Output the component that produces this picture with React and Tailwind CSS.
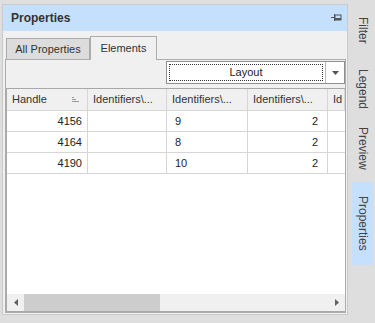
import React from "react";

const font = { fontFamily: "'Liberation Sans', Arial, sans-serif" };

const columns = [
  { title: "Handle", w: "w-[81px]", sort: true },
  { title: "Identifiers\\...", w: "w-[79px]" },
  { title: "Identifiers\\...", w: "w-[81px]" },
  { title: "Identifiers\\...", w: "w-[80px]" },
  { title: "Id", w: "flex-1" },
];

const rows = [
  ["4156", "", "9", "2"],
  ["4164", "", "8", "2"],
  ["4190", "", "10", "2"],
];

const SortIcon = () => (
  <svg width="7" height="6" viewBox="0 0 7 6" className="shrink-0">
    <rect x="0" y="0" width="2" height="1" fill="#9a9a9a" />
    <rect x="0" y="2" width="4" height="1" fill="#9a9a9a" />
    <rect x="0" y="4" width="7" height="1" fill="#9a9a9a" />
  </svg>
);

const PinIcon = () => (
  <svg width="11" height="8" viewBox="0 0 11 8">
    <rect x="0" y="3" width="3" height="1" fill="#555" />
    <rect x="3" y="0" width="1" height="7" fill="#555" />
    <rect x="4" y="1" width="6" height="5" fill="none" stroke="#555" strokeWidth="1" />
    <rect x="4" y="4" width="6" height="2" fill="#555" />
  </svg>
);

const SideTab = ({ label, active, className }) => (
  <div
    className={`flex items-center justify-center w-[21px] ${className} ${
      active ? "bg-[#c4e0fc]" : ""
    }`}
  >
    <span className="[writing-mode:vertical-rl] text-[12px] text-[#444]">{label}</span>
  </div>
);

export default function App() {
  return (
    <div className="w-[375px] h-[323px] bg-[#dedede] flex overflow-hidden" style={font}>
      {/* docked panel */}
      <div className="pt-[4px] pl-[2px]">
        <div className="w-[346px] h-[311px] border border-[#cacaca] bg-[#f0f0f0] flex flex-col">
          <div className="h-[26px] bg-[#c4e0fc] flex items-center justify-between pl-[8px] pr-[5px] shrink-0">
            <span className="text-[12px] font-bold text-[#333]">Properties</span>
            <PinIcon />
          </div>

          <div className="flex-1 flex flex-col pl-[2px] pr-[1px] pt-[5px] pb-[1px] min-h-0">
            {/* tabs */}
            <div className="flex items-end h-[23px] pl-[1px] shrink-0">
              <div className="h-[21px] w-[84px] bg-[#dcdcdc] border border-[#acacac] border-b-0 flex items-center justify-center text-[11px] text-[#333]">
                All Properties
              </div>
              <div className="h-[24px] w-[67px] bg-[#f0f0f0] border border-[#acacac] border-b-0 -mb-[1px] relative z-10 flex items-center justify-center text-[11px] text-[#333]">
                Elements
              </div>
            </div>

            {/* tab page */}
            <div className="flex-1 border border-[#acacac] flex flex-col min-h-0">
              <div className="h-[28px] flex items-start justify-end pt-[1px] shrink-0">
                <div className="w-[179px] h-[23px] border border-[#8f8f8f] bg-white flex">
                  <div className="flex-1 m-[2px] border border-dotted border-[#333] flex items-center justify-center text-[11px] text-[#222]">
                    Layout
                  </div>
                  <div className="w-[19px] border-l border-[#b8b8b8] flex items-center justify-center">
                    <svg width="7" height="4" viewBox="0 0 7 4">
                      <path d="M0 0 H7 L3.5 4 Z" fill="#555" />
                    </svg>
                  </div>
                </div>
              </div>

              {/* grid */}
              <div className="flex-1 flex flex-col border-t border-l border-b border-[#a9a9a9] bg-white min-h-0">
                <div className="h-[22px] flex bg-[#f0f0f0] border-b border-[#d6d6d6] shrink-0">
                  {columns.map((c, i) => (
                    <div
                      key={i}
                      className={`${c.w} border-r border-[#d6d6d6] flex items-center justify-between pl-[5px] pr-[8px] text-[11px] text-[#333] overflow-hidden whitespace-nowrap`}
                    >
                      <span>{c.title}</span>
                      {c.sort && <SortIcon />}
                    </div>
                  ))}
                </div>

                {rows.map((r, ri) => (
                  <div key={ri} className="h-[21px] flex border-b border-[#d6d6d6] shrink-0">
                    <div className="w-[81px] border-r border-[#d6d6d6] flex items-center justify-end pr-[5px] text-[11px] text-[#222]">
                      {r[0]}
                    </div>
                    <div className="w-[79px] border-r border-[#d6d6d6]" />
                    <div className="w-[81px] border-r border-[#d6d6d6] flex items-center pl-[8px] text-[11px] text-[#222]">
                      {r[2]}
                    </div>
                    <div className="w-[80px] border-r border-[#d6d6d6] flex items-center justify-end pr-[9px] text-[11px] text-[#222]">
                      {r[3]}
                    </div>
                    <div className="flex-1" />
                  </div>
                ))}

                <div className="flex-1" />

                {/* horizontal scrollbar */}
                <div className="h-[17px] bg-[#f0f0f0] flex items-center shrink-0">
                  <div className="w-[17px] h-full flex items-center justify-center">
                    <svg width="4" height="7" viewBox="0 0 4 7">
                      <path d="M4 0 V7 L0 3.5 Z" fill="#606060" />
                    </svg>
                  </div>
                  <div className="w-[136px] h-full bg-[#cdcdcd]" />
                  <div className="flex-1" />
                  <div className="w-[17px] h-full flex items-center justify-center">
                    <svg width="4" height="7" viewBox="0 0 4 7">
                      <path d="M0 0 V7 L4 3.5 Z" fill="#606060" />
                    </svg>
                  </div>
                </div>
              </div>
            </div>
          </div>
        </div>
      </div>

      {/* right side tabs */}
      <div className="flex-1 flex flex-col items-center pl-[2px]">
        <SideTab label="Filter" className="h-[60px]" />
        <SideTab label="Legend" className="h-[58px]" />
        <SideTab label="Preview" className="h-[60px]" />
        <SideTab label="Properties" active className="h-[83px] mt-[4px]" />
      </div>
    </div>
  );
}
